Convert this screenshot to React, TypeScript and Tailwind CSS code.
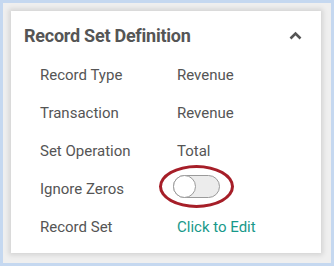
import React from "react";

export default function App() {
  const rows: { label: string; value?: string; link?: boolean; toggle?: boolean }[] = [
    { label: "Record Type", value: "Revenue" },
    { label: "Transaction", value: "Revenue" },
    { label: "Set Operation", value: "Total" },
    { label: "Ignore Zeros", toggle: true },
    { label: "Record Set", value: "Click to Edit", link: true },
  ];
  return (
    <div
      className="w-[334px] h-[266px] bg-[#c5d8f0] p-[3px]"
      style={{ fontFamily: "Roboto, 'Noto Sans', sans-serif" }}
    >
      <div className="w-full h-full bg-[#efefef] pt-[8px] pl-[8px] pr-[10px] pb-[10px]">
        <div className="w-[310px] h-[242px] bg-white shadow-[0_0_5px_2px_rgba(0,0,0,0.12)] flex flex-col">
          <div className="flex items-center justify-between pl-[13px] pr-[19px] pt-[14px] h-[36px]">
            <span className="text-[18px] font-bold text-[#555] leading-none tracking-[-0.25px]">
              Record Set Definition
            </span>
            <svg width="13" height="9" viewBox="0 0 13 9" className="mb-[2px]">
              <path d="M1.5 7.5 L6.5 2.5 L11.5 7.5" fill="none" stroke="#555" strokeWidth="2.6" />
            </svg>
          </div>
          <div className="flex flex-col pt-[9px] pl-[29px]">
            {rows.map((r) => (
              <div key={r.label} className="flex items-center h-[38px]">
                <span className="w-[137px] text-[15px] text-[#555]">{r.label}</span>
                {r.toggle ? (
                  <div className="relative ml-[-4px] mb-[6px] w-[47px] h-[23px] rounded-full bg-[#ececec] border border-[#9a9a9a]">
                    <div className="absolute left-[-1px] top-[-1px] w-[23px] h-[23px] rounded-full bg-white border border-[#9a9a9a]" />
                    <div className="absolute left-[-15px] top-[-11px] w-[75px] h-[43px] rounded-[50%] border-[3px] border-[#a61e28]" />
                  </div>
                ) : (
                  <span className={"text-[15px] " + (r.link ? "text-[#18998a]" : "text-[#555]")}>{r.value}</span>
                )}
              </div>
            ))}
          </div>
        </div>
      </div>
    </div>
  );
}
